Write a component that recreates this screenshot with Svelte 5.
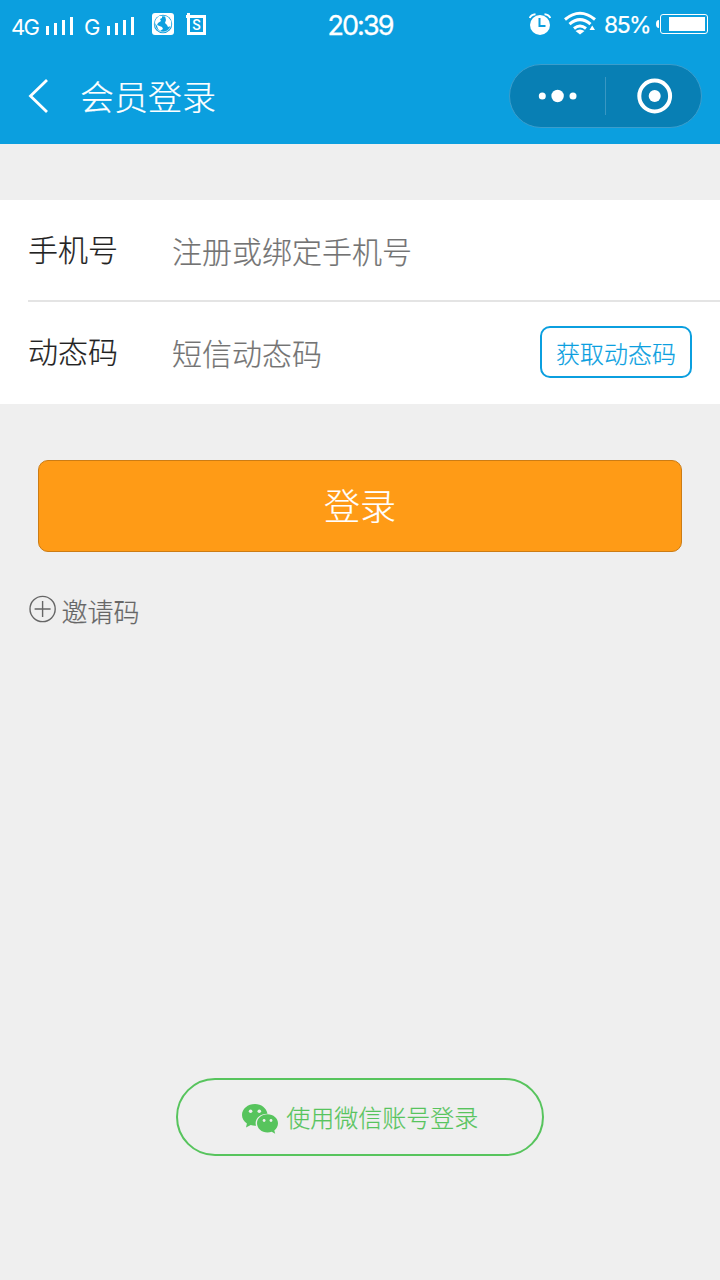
<script>
  const fields = [
    { label: '手机号', hint: '注册或绑定手机号' },
    { label: '动态码', hint: '短信动态码', action: '获取动态码' }
  ];
</script>

<div class="page">
  <header>
    <div class="status">
      <div class="side left">
        <span class="net g4">4G</span>
        <svg class="bars" width="28" height="18" viewBox="0 0 28 18" fill="#fff"><path d="M0 9h3v9H0zM8 6h3v12H8zM16 3h3v15h-3zM24 0h3v18h-3z" /></svg>
        <span class="net g2">G</span>
        <svg class="bars" width="28" height="18" viewBox="0 0 28 18" fill="#fff"><path d="M0 9h3v9H0zM8 6h3v12H8zM16 3h3v15h-3zM24 0h3v18h-3z" /></svg>
        <svg class="globe" width="22" height="22" viewBox="0 0 22 22">
          <rect width="22" height="22" rx="3" fill="#fff" />
          <circle cx="11" cy="11" r="9.200" fill="#0b9fdf" />
          <circle cx="11" cy="11" r="8" fill="none" stroke="#fff" stroke-width=".6" />
          <path fill="#fff" d="M3 10 4 6 7 3 10 3 10 5 8 6 9 8 6 10 5 12 10 14 11 16 8 18 6 16 5 13zM13 3 16 4 19 8 19 13 16 14 15 12 13 10 14 7z" />
        </svg>
        <svg class="crop" width="20" height="22" viewBox="0 0 20 22">
          <path d="M1.500 0v2M0 2h20v20H1V5H0z M4 5v14h13V5z" fill="#fff" fill-rule="evenodd" />
          <path d="M1 0h3v5H1z" fill="#fff" />
          <text x="10.500" y="17" text-anchor="middle">S</text>
        </svg>
      </div>
      <time>20:39</time>
      <div class="side right">
        <svg class="alarm" width="22" height="22" viewBox="0 0 22 22">
          <circle cx="11" cy="12" r="10" fill="#fff" />
          <path d="M10.500 5v8h6" fill="none" stroke="#0b9fdf" stroke-width="2" />
          <path d="M.8 5Q2 1.500 6.500 1.200M15.500 1.200Q20 1.500 21.200 5" fill="none" stroke="#fff" stroke-width="2" />
        </svg>
        <svg class="wifi" width="32" height="24" viewBox="0 0 32 24" fill="none" stroke="#fff" stroke-width="3">
          <path d="M1 8.500Q16-4 31 8.500M5.500 13.200Q16 4 26.500 13.200M10 17.500Q16 12.500 22 17.500" />
          <path d="M11.500 20Q16 17 20.500 20L16 23.500zM25.500 19l2.700-4.500 2.800 4.500z" fill="#fff" stroke="none" />
        </svg>
        <span class="percent">85%</span>
        <svg class="battery" width="52" height="20" viewBox="0 0 52 20">
          <path d="M3 6v8Q0 14 0 10t3-4z" fill="#fff" />
          <rect x="4.500" y=".5" width="47" height="19" rx="2.500" fill="none" stroke="#fff" />
          <path d="M13 3h36v14H13z" fill="#fff" />
        </svg>
      </div>
    </div>
    <nav>
      <svg class="back" width="22" height="36" viewBox="0 0 22 36" fill="none" stroke="#fff" stroke-width="2.800"><path d="M19 2 2.500 18 19 34" /></svg>
      <h1>会员登录</h1>
      <div class="capsule">
        <svg width="95" height="62" viewBox="0 0 95 62" fill="#fff"><circle cx="32.300" cy="31" r="3.500" /><circle cx="47.600" cy="31" r="6.200" /><circle cx="63" cy="31" r="3.500" /></svg>
        <i></i>
        <svg width="95" height="62" viewBox="0 0 95 62" fill="#fff"><circle cx="48.700" cy="31" r="15.400" fill="none" stroke="#fff" stroke-width="4" /><circle cx="48.700" cy="31" r="6" /></svg>
      </div>
    </nav>
  </header>

  <section class="form">
    {#each fields as field}
      <div class="row">
        <span class="label">{field.label}</span>
        <span class="hint">{field.hint}</span>
        {#if field.action}<button class="code">{field.action}</button>{/if}
      </div>
    {/each}
  </section>

  <button class="login">登录</button>

  <div class="invite">
    <svg width="28" height="28" viewBox="0 0 28 28" fill="none" stroke="#666" stroke-width="1.400"><circle cx="13.600" cy="14" r="12.600" /><path d="M5.600 14h16M13.600 6v16" /></svg>
    <span>邀请码</span>
  </div>

  <button class="wechat">
    <svg width="37" height="31" viewBox="0 0 37 31">
      <path fill="#57c45d" d="M13 0C5.800 0 0 4.900 0 11c0 3.400 1.900 6.400 4.900 8.400L4 23.500l4.700-2.500c1.700.5 3.400.8 5.300.7C12 15 18 9.500 25.500 9.700 24.500 4 19.300 0 13 0z" />
      <path fill="#57c45d" d="M25.500 10.200C19.600 10.200 15 14.200 15 19.300s4.600 9.300 10.500 9.300c1.500 0 2.900-.3 4.200-.8l3.500 2-.9-3.400c2.300-1.700 3.700-4.200 3.700-7.100 0-5.100-4.600-9.100-10.500-9.100z" />
      <g fill="#efefef"><circle cx="8.600" cy="7.200" r="1.800" /><circle cx="17.300" cy="7.200" r="1.800" /><circle cx="22.100" cy="16.500" r="1.400" /><circle cx="29" cy="16.500" r="1.400" /></g>
    </svg>
    <span>使用微信账号登录</span>
  </button>
</div>

<style>
  :global(body) { background: #efefef; }
  .page {
    display: flex;
    flex-direction: column;
    width: 720px;
    height: 1280px;
    overflow: hidden;
    background: #efefef;
    font-family: 'Noto Sans CJK SC', sans-serif;
    font-weight: 300;
    -webkit-text-stroke: .2px currentColor;
  }
  * { box-sizing: border-box; }
  svg { display: block; flex: none; }
  button { margin: 0; padding: 0; font: inherit; }
  header { height: 144px; background: #0b9fdf; color: #fff; flex: none; }
  .status {
    display: grid;
    grid-template-columns: 300px 120px 300px;
    height: 48px;
    font-family: Inter, sans-serif;
    font-weight: 400;
    -webkit-text-stroke: 0;
  }
  .side { display: flex; align-items: flex-start; }
  .left { padding-left: 11px; }
  .net { margin-top: 13px; font-size: 22px; line-height: 28px; letter-spacing: -1.800px; }
  .g4 { width: 35px; }
  .g2 { width: 23px; }
  .bars { margin: 17px 10px 0 0; }
  .left .g2 + .bars { margin-right: 17px; }
  .globe { margin-top: 13px; }
  .crop { margin: 13px 0 0 12px; }
  .crop text { fill: #fff; font: 500 14px Roboto, sans-serif; }
  time { padding-top: 10px; text-align: center; font-size: 27px; line-height: 32px; letter-spacing: -1.900px; -webkit-text-stroke: .3px #fff; }
  .right { justify-content: flex-end; padding-right: 12px; }
  .alarm { margin: 13px 13.500px 0 0; }
  .wifi { margin: 11px 8px 0 0; }
  .percent { width: 52px; margin-top: 10px; font-size: 23px; line-height: 30px; letter-spacing: -1.600px; white-space: nowrap; -webkit-text-stroke: .2px #fff; }
  .battery { margin-top: 14px; }
  nav { display: flex; align-items: center; height: 96px; padding: 0 18px 0 28px; }
  h1 { margin: 0 auto 0 30px; font-size: 34px; line-height: 50px; font-weight: 300; }
  .capsule { display: flex; align-items: center; width: 193px; height: 64px; border: 1px solid #3b9dcc; border-radius: 32px; background: #087fb4; }
  .capsule i { width: 1px; height: 38px; background: #3997c3; }
  .form { margin-top: 56px; height: 204px; padding-left: 28px; background: #fff; flex: none; }
  .row { display: flex; align-items: center; height: 100px; padding-right: 28px; }
  .row:first-child { height: 102px; border-bottom: 2px solid #e4e4e4; }
  .label { width: 144px; padding-bottom: 4px; font-size: 30px; line-height: 44px; color: #222; }
  .hint { flex: 1; font-size: 30px; line-height: 44px; color: #737373; }
  .code { width: 152px; height: 52px; padding-top: 1px; border: 2px solid #0b9fdf; border-radius: 10px; background: #fff; color: #0b9fdf; font-size: 24px; line-height: 47px; }
  .login { height: 92px; margin: 56px 38px 0; padding-bottom: 4px; border: 1px solid #cc7c14; border-radius: 10px; background: #ff9b16; color: #fff; font-size: 36px; line-height: 86px; flex: none; }
  .invite { display: flex; align-items: center; gap: 4.500px; height: 40px; margin: 37px 0 0 29px; font-size: 26px; line-height: 40px; color: #666; }
  .invite span { padding-top: 3px; }
  .wechat { display: flex; align-items: center; justify-content: center; gap: 7.500px; width: 368px; height: 78px; margin: auto auto 124px; border: 2px solid #57c45d; border-radius: 39px; background: transparent; color: #57c45d; font-size: 24px; line-height: 40px; }
  .wechat svg { margin-top: 4px; }
</style>
